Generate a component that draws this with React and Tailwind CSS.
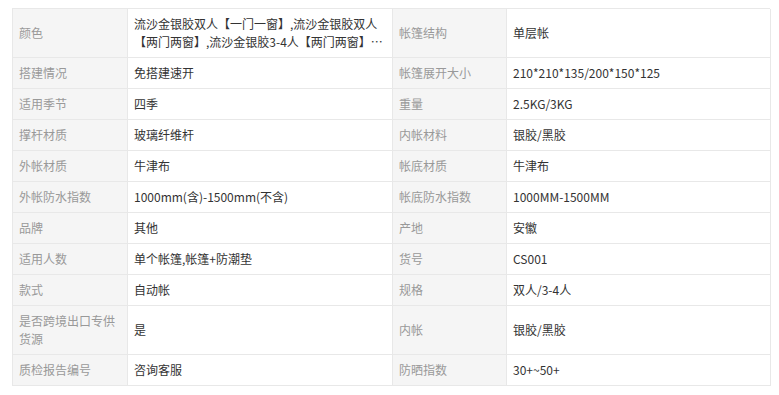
const rows = [
  ["颜色", "流沙金银胶双人【一门一窗】,流沙金银胶双人【两门两窗】,流沙金银胶3-4人【两门两窗】,流沙金银胶3-4人【一门一窗】", "帐篷结构", "单层帐"],
  ["搭建情况", "免搭建速开", "帐篷展开大小", "210*210*135/200*150*125"],
  ["适用季节", "四季", "重量", "2.5KG/3KG"],
  ["撑杆材质", "玻璃纤维杆", "内帐材料", "银胶/黑胶"],
  ["外帐材质", "牛津布", "帐底材质", "牛津布"],
  ["外帐防水指数", "1000mm(含)-1500mm(不含)", "帐底防水指数", "1000MM-1500MM"],
  ["品牌", "其他", "产地", "安徽"],
  ["适用人数", "单个帐篷,帐篷+防潮垫", "货号", "CS001"],
  ["款式", "自动帐", "规格", "双人/3-4人"],
  ["是否跨境出口专供货源", "是", "内帐", "银胶/黑胶"],
  ["质检报告编号", "咨询客服", "防晒指数", "30+~50+"],
];

function Label({ children }) {
  return (
    <div className="flex items-center bg-[#f5f5f5] px-[6px] py-[6px] border-r border-b border-[#e8e8e8] text-[#999999]">
      <span>{children}</span>
    </div>
  );
}

function Value({ children }) {
  return (
    <div className="flex items-center bg-white px-[6px] py-[6px] border-r border-b border-[#e8e8e8] text-[#333333]">
      <span className="line-clamp-2 break-all">{children}</span>
    </div>
  );
}

export default function App() {
  return (
    <div className="w-[779px] h-[395px] bg-white pt-[8px] pl-[12px] font-['Microsoft_YaHei','Noto_Sans_CJK_SC',sans-serif] text-[12px] leading-[18px]">
      <div className="grid grid-cols-[115px_265px_114px_264px] w-[758px] border-t border-l border-[#e8e8e8]">
        {rows.map((r, i) => (
          <div key={i} className="contents">
            <Label>{r[0]}</Label>
            <Value>{r[1]}</Value>
            <Label>{r[2]}</Label>
            <Value>{r[3]}</Value>
          </div>
        ))}
      </div>
    </div>
  );
}
